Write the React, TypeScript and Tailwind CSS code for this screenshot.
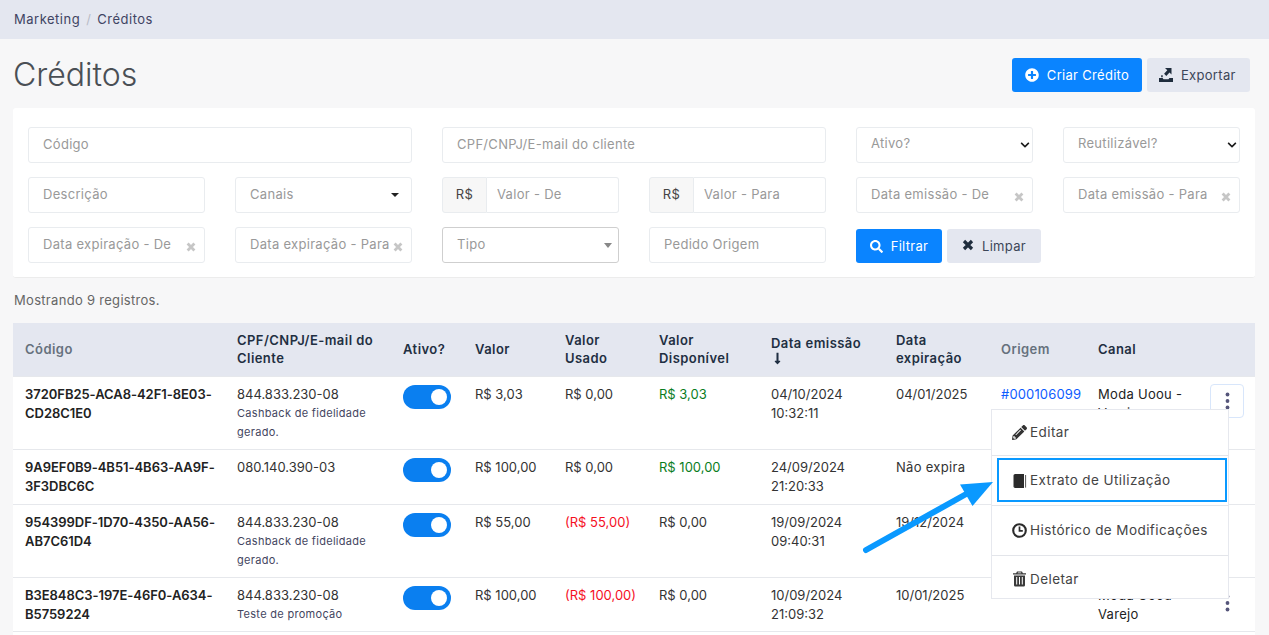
import React from "react";
import { FaPlusCircle, FaSearch, FaPencilAlt, FaLongArrowAltDown, FaChevronDown } from "react-icons/fa";

function ExportIcon() {
  return (
    <svg width="14" height="14" viewBox="0 0 14 14" className="text-[#1f2d3d]" fill="currentColor">
      <path d="M0 10h3.6l.9 1.2h5l.9-1.2H14v4H0z" />
      <path d="M6 0h6.5v6.5l-2-2-3.2 3.4-2.2-2.2 3.2-3.4z" />
      <path d="M2.2 7.2h1.5v2H2.2z" />
    </svg>
  );
}

function ClearX() {
  return (
    <svg width="10" height="10" viewBox="0 0 10 10" className="absolute right-[9px] top-[15px]" fill="none">
      <path d="M1.6 1.6 8.4 8.4M8.4 1.6 1.6 8.4" stroke="#c6c6c6" strokeWidth="2.8" />
    </svg>
  );
}

function BoldX() {
  return (
    <svg width="12" height="12" viewBox="0 0 12 12" fill="none" className="mt-[-2px]">
      <path d="M2 2 10 10M10 2 2 10" stroke="#1f2d3d" strokeWidth="3.2" />
    </svg>
  );
}

function BookIcon() {
  return (
    <svg width="15" height="16" viewBox="0 0 15 16" fill="none">
      <path d="M3.2 1H12v12H3.2C2.2 13 1.5 13.4 1.5 14V2.8C1.5 1.8 2.2 1 3.2 1z" fill="#2b2b2b" />
      <path d="M1.5 13.6c0 .8.7 1.4 1.6 1.4H12v-2H3.2c-1 0-1.7.2-1.7.6z" fill="#2b2b2b" />
      <path d="M13.6 2v12.6" stroke="#555" strokeWidth="1" />
    </svg>
  );
}

function ClockIcon() {
  return (
    <svg width="15" height="15" viewBox="0 0 15 15" fill="none">
      <circle cx="7.5" cy="7.5" r="6.3" stroke="#2b2b2b" strokeWidth="2.1" />
      <path d="M7.5 3.6v4.3h3.3" stroke="#2b2b2b" strokeWidth="1.7" />
    </svg>
  );
}

function TrashIcon() {
  return (
    <svg width="15" height="16" viewBox="0 0 15 16" fill="#3a3a3a">
      <path d="M5 .5h5l.9 1.8H14v1.3H1V2.3h3.1zM6 1.6l-.4.7h3.8l-.4-.7z" fillRule="evenodd" />
      <path
        d="M2 4.4h11V14c0 .9-.7 1.6-1.6 1.6H3.6C2.7 15.6 2 14.9 2 14zM4.2 6v7.6h1V6zM7 6v7.6h1V6zM9.8 6v7.6h1V6z"
        fillRule="evenodd"
      />
    </svg>
  );
}

const inputCls =
  "w-full h-9 rounded-[3px] border border-[#e9ecef] bg-white pb-[2px] px-[14px] text-[13px] text-[#495057] outline-none placeholder:text-[#999]";

function TextInput({ placeholder, className = "" }: { placeholder: string; className?: string }) {
  return <input placeholder={placeholder} className={`${inputCls} ${className}`} />;
}

function DateInput({ placeholder }: { placeholder: string }) {
  return (
    <div className="relative">
      <input placeholder={placeholder} className={`${inputCls} pr-0`} />
      <ClearX />
    </div>
  );
}

function MoneyInput({ placeholder }: { placeholder: string }) {
  return (
    <div className="flex h-9">
      <span className="w-[45px] shrink-0 flex items-center justify-center rounded-l-[3px] border border-[#e9ecef] bg-[#f7f7f7] text-[13px] text-[#444]">
        R$
      </span>
      <input
        placeholder={placeholder}
        className="min-w-0 flex-1 rounded-r-[3px] border border-l-0 border-[#e9ecef] bg-white px-[10px] text-[13px] outline-none placeholder:text-[#999]"
      />
    </div>
  );
}

function NativeSelect({ label }: { label: string }) {
  return (
    <div className="relative">
      <select
        defaultValue=""
        className="w-full h-9 appearance-none rounded-[3px] border border-[#e9ecef] bg-white pl-[14px] pb-[2px] text-[13px] text-[#999] outline-none"
      >
        <option value="">{label}</option>
      </select>
      <FaChevronDown className="absolute right-[3px] top-[13px] w-[10px] h-[10px] text-[#1a1a1a] pointer-events-none" />
    </div>
  );
}

function Toggle() {
  return (
    <div className="w-12 h-6 rounded-full bg-[#0a7ff0] flex items-center justify-end pr-1">
      <div className="w-4 h-4 rounded-full bg-white" />
    </div>
  );
}

function Dots() {
  return (
    <svg width="5" height="18" viewBox="0 0 5 18" className="text-[#55557a]" fill="currentColor">
      <circle cx="2.5" cy="2.5" r="1.9" />
      <circle cx="2.5" cy="9" r="1.9" />
      <circle cx="2.5" cy="15.5" r="1.9" />
    </svg>
  );
}

type Row = {
  code: [string, string];
  doc: string;
  note?: string[];
  valor: string;
  usado: string;
  usadoRed?: boolean;
  disp: string;
  dispGreen?: boolean;
  date: [string, string];
  exp: string;
  origem?: string;
  canal?: string[];
  h: string;
};

const rows: Row[] = [
  {
    code: ["3720FB25-ACA8-42F1-8E03-", "CD28C1E0"],
    doc: "844.833.230-08",
    note: ["Cashback de fidelidade", "gerado."],
    valor: "R$ 3,03",
    usado: "R$ 0,00",
    disp: "R$ 3,03",
    dispGreen: true,
    date: ["04/10/2024", "10:32:11"],
    exp: "04/01/2025",
    origem: "#000106099",
    canal: ["Moda Uoou -", "Varejo"],
    h: "h-[73px]",
  },
  {
    code: ["9A9EF0B9-4B51-4B63-AA9F-", "3F3DBC6C"],
    doc: "080.140.390-03",
    valor: "R$ 100,00",
    usado: "R$ 0,00",
    disp: "R$ 100,00",
    dispGreen: true,
    date: ["24/09/2024", "21:20:33"],
    exp: "Não expira",
    h: "h-[55px]",
  },
  {
    code: ["954399DF-1D70-4350-AA56-", "AB7C61D4"],
    doc: "844.833.230-08",
    note: ["Cashback de fidelidade", "gerado."],
    valor: "R$ 55,00",
    usado: "(R$ 55,00)",
    usadoRed: true,
    disp: "R$ 0,00",
    date: ["19/09/2024", "09:40:31"],
    exp: "19/12/2024",
    h: "h-[73px]",
  },
  {
    code: ["B3E848C3-197E-46F0-A634-", "B5759224"],
    doc: "844.833.230-08",
    note: ["Teste de promoção"],
    valor: "R$ 100,00",
    usado: "(R$ 100,00)",
    usadoRed: true,
    disp: "R$ 0,00",
    date: ["10/09/2024", "21:09:32"],
    exp: "10/01/2025",
    canal: ["Moda Uoou -", "Varejo"],
    h: "h-[54px]",
  },
];

const td = "align-top pt-2 px-3 text-[13px] leading-[19px] text-[#333] tracking-normal whitespace-nowrap";
const th = "px-3 align-middle text-left text-[13px] leading-[18px] font-semibold text-[#1f2f42] tracking-[0.45px]";

function Menu() {
  return (
    <div className="absolute right-[26px] top-[32px] w-[238px] h-[190px] z-10 bg-white border border-[#e6e8ee] text-[13.5px] text-[#444] tracking-[0.42px] flex flex-col">
      <div className="h-[46px] shrink-0 flex items-center pl-5 gap-[3px] border-b border-[#e3e5ea]">
        <FaPencilAlt className="w-[15px] h-[15px] text-[#333]" />
        <span>Editar</span>
      </div>
      <div className="h-[50px] shrink-0 pt-[2px] pl-[5px] pr-[1px] pb-[3px] border-b border-[#e3e5ea]">
        <div className="h-[44px] border-2 border-[#0a99ff] flex items-center pl-[13px] pt-[2px] gap-[3px]">
          <BookIcon />
          <span>Extrato de Utilização</span>
        </div>
      </div>
      <div className="h-[50px] shrink-0 flex items-center pl-5 pt-[1px] gap-[3px] border-b border-[#e3e5ea]">
        <ClockIcon />
        <span>Histórico de Modificações</span>
      </div>
      <div className="flex-1 flex items-center pl-5 pt-[5px] gap-[3px]">
        <TrashIcon />
        <span>Deletar</span>
      </div>
    </div>
  );
}

export default function App() {
  return (
    <div className="relative h-[635px] overflow-hidden bg-[#f7f7f8] font-[Inter,sans-serif] tracking-[0.3px]">
      <div className="h-[39px] bg-[#e4e7f0] flex items-center pl-[14px] text-[13px] text-[#3f4463] tracking-[0.5px]">
        <span>Marketing</span>
        <span className="mx-[6px] text-[#b9bcc7]">/</span>
        <span>Créditos</span>
      </div>

      <div className="pl-[13px] pr-[14px]">
        <div className="flex items-center justify-between h-[69px] pt-[3px] pr-[5px]">
          <h1 className="text-[32px] font-light text-[#4a4f55] tracking-normal">Créditos</h1>
          <div className="flex gap-[5px]">
            <button className="h-[34px] w-[130px] rounded-[3px] bg-[#0a84ff] text-white text-[13px] flex items-center justify-center gap-2">
              <FaPlusCircle className="w-[14px] h-[14px]" />
              <span className="pt-[1px]">Criar Crédito</span>
            </button>
            <button className="h-[34px] w-[103px] rounded-[3px] bg-[#e4e7f0] text-[#3c4658] text-[13px] flex items-center pl-[12px] gap-[8px]">
              <ExportIcon />
              <span className="pt-[1px]">Exportar</span>
            </button>
          </div>
        </div>

        <div className="h-[170px] rounded-[3px] bg-white border-b border-[#ececec] pt-[19px] px-[15px]">
          <div className="grid grid-cols-6 gap-x-[30px] gap-y-[14px]">
            <div className="col-span-2"><TextInput placeholder="Código" /></div>
            <div className="col-span-2"><TextInput placeholder="CPF/CNPJ/E-mail do cliente" /></div>
            <NativeSelect label="Ativo?" />
            <NativeSelect label="Reutilizável?" />

            <TextInput placeholder="Descrição" />
            <div className="h-9 rounded-[3px] border border-[#e9ecef] bg-white px-[14px] text-[13px] text-[#999] flex items-center justify-between">
              <span>Canais</span>
              <span className="w-0 h-0 border-x-[4px] border-x-transparent border-t-[4px] border-t-[#222] mr-[-2px]" />
            </div>
            <MoneyInput placeholder="Valor - De" />
            <MoneyInput placeholder="Valor - Para" />
            <DateInput placeholder="Data emissão - De" />
            <DateInput placeholder="Data emissão - Para" />

            <DateInput placeholder="Data expiração - De" />
            <DateInput placeholder="Data expiração - Para" />
            <div className="h-9 rounded-[3px] border border-[#cfcfcf] bg-white px-[14px] text-[13px] text-[#999] flex items-center justify-between">
              <span>Tipo</span>
              <span className="w-0 h-0 border-x-[4px] border-x-transparent border-t-[5px] border-t-[#888] mr-[-8px]" />
            </div>
            <TextInput placeholder="Pedido Origem" />
            <div className="col-span-2 flex gap-[5px] items-end">
              <button className="h-[34px] w-[86px] rounded-[3px] bg-[#0a84ff] text-white text-[13px] flex items-center justify-center gap-2">
                <FaSearch className="w-[13px] h-[13px]" />
                <span className="pt-[1px]">Filtrar</span>
              </button>
              <button className="h-[34px] w-[94px] rounded-[3px] bg-[#e4e7f0] text-[#3c4658] text-[13px] flex items-center justify-center gap-2">
                <BoldX />
                <span className="pt-[1px]">Limpar</span>
              </button>
            </div>
          </div>
        </div>

        <div className="h-[45px] flex items-center pl-[1px] text-[13px] text-[#666]">Mostrando 9 registros.</div>

        <table className="w-full table-fixed bg-white border-collapse">
          <colgroup>
            <col className="w-[212px]" />
            <col className="w-[166px]" />
            <col className="w-[72px]" />
            <col className="w-[90px]" />
            <col className="w-[94px]" />
            <col className="w-[112px]" />
            <col className="w-[125px]" />
            <col className="w-[105px]" />
            <col className="w-[97px]" />
            <col className="w-[112px]" />
            <col className="w-[57px]" />
          </colgroup>
          <thead>
            <tr className="h-[53px] bg-[#e4e7f0]">
              <th className={`${th} !text-[#66717d]`}>Código</th>
              <th className={th}>CPF/CNPJ/E-mail do<br />Cliente</th>
              <th className={th}>Ativo?</th>
              <th className={th}>Valor</th>
              <th className={th}>Valor<br />Usado</th>
              <th className={th}>Valor<br />Disponível</th>
              <th className={th}>
                <span className="block">Data emissão</span>
                <FaLongArrowAltDown className="w-[13px] h-[13px]" />
              </th>
              <th className={th}>Data<br />expiração</th>
              <th className={`${th} !text-[#66717d]`}>Origem</th>
              <th className={th}>Canal</th>
              <th className={th}></th>
            </tr>
          </thead>
          <tbody>
            {rows.map((r, i) => (
              <tr key={r.code[0]} className={`${r.h} border-t border-[#e6e8ec]`}>
                <td className={`${td} font-semibold !text-[#222] !tracking-[-0.04px]`}>
                  <span className="block">{r.code[0]}</span>
                  <span className="block">{r.code[1]}</span>
                </td>
                <td className={td}>
                  <span className="block">{r.doc}</span>
                  {r.note?.map((n) => (
                    <span key={n} className="block text-[11px] text-[#44465f] tracking-[0.3px]">{n}</span>
                  ))}
                </td>
                <td className={td}><Toggle /></td>
                <td className={td}>{r.valor}</td>
                <td className={`${td} ${r.usadoRed ? "!text-[#f5101f]" : ""}`}>{r.usado}</td>
                <td className={`${td} ${r.dispGreen ? "!text-[#0a7d1e]" : ""}`}>{r.disp}</td>
                <td className={td}>
                  <span className="block">{r.date[0]}</span>
                  <span className="block">{r.date[1]}</span>
                </td>
                <td className={`${td} ${r.exp === "Não expira" ? "!tracking-[0.3px]" : ""}`}>{r.exp}</td>
                <td className={`${td} !text-[#0d5cff] !tracking-[0.15px]`}>{r.origem}</td>
                <td className={`${td} !text-[#222] !tracking-[0.3px]`}>
                  {r.canal?.map((c) => <span key={c} className="block">{c}</span>)}
                </td>
                <td className={`${td} relative`}>
                  {i === 0 && (
                    <>
                      <div className="w-[34px] h-[34px] mt-[-1px] rounded-[4px] border border-[#d8e6fb] bg-white flex items-center justify-center">
                        <Dots />
                      </div>
                      <Menu />
                    </>
                  )}
                  {i === 3 && (
                    <div className="w-[34px] h-[34px] flex items-center justify-center">
                      <Dots />
                    </div>
                  )}
                </td>
              </tr>
            ))}
            <tr className="h-10 border-t border-[#e6e8ec]">
              <td colSpan={11}></td>
            </tr>
          </tbody>
        </table>
      </div>

      <svg className="absolute left-[860px] top-[478px] z-20" width="140" height="80" viewBox="860 478 140 80" fill="none">
        <path d="M866 550 L968 493" stroke="#0a99ff" strokeWidth="6" strokeLinecap="round" />
        <polygon points="993,482 960,484.5 972.5,506" fill="#0a99ff" />
      </svg>
    </div>
  );
}
